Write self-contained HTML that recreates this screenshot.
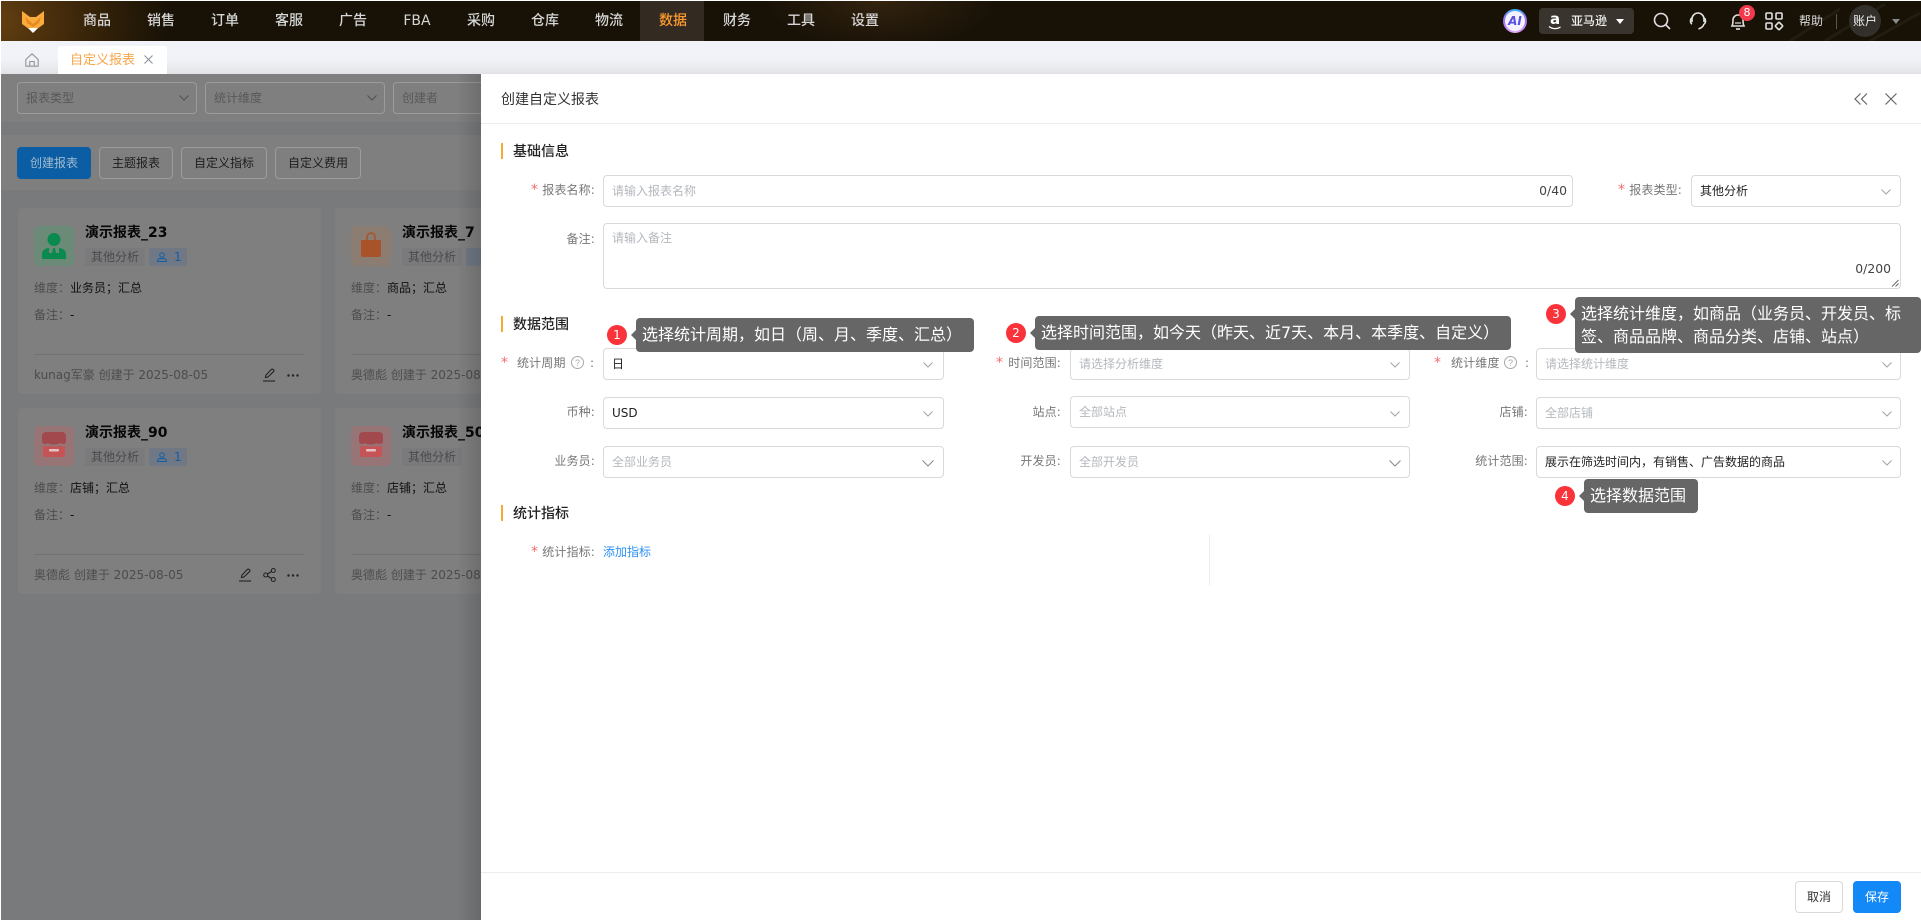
<!DOCTYPE html>
<html lang="zh"><head><meta charset="utf-8"><title>创建自定义报表</title>
<style>
*{box-sizing:border-box}
html,body{margin:0;padding:0;width:1921px;height:920px;overflow:hidden;background:#fff;font-family:"DejaVu Sans","Noto Sans CJK SC",sans-serif;font-size:12px;color:#333}
.a{position:absolute;white-space:nowrap}
svg{position:absolute;overflow:visible}
#nav{left:1px;top:1px;width:1920px;height:40px;background:radial-gradient(120px 50px at 880px 0,#33230f,transparent),radial-gradient(190px 120px at -20px 20px,#6b4413 0,#3a2509 55%,transparent 100%),#171106}
.n{position:absolute;top:1px;width:64px;height:40px;line-height:40px;text-align:center;font-size:14px;font-weight:500;color:#d6d6d6}
.f{position:absolute;top:82px;height:32px;background:#7f7f7f;border:1px solid #9b9b9b;border-radius:4px;line-height:30px;padding-left:8px;font-size:12px;color:#585858}
.b{position:absolute;top:147px;height:32px;line-height:30px;text-align:center;border:1px solid #9c9c9c;border-radius:4px;color:#1d1d1d;font-size:12px}
.card{position:absolute;width:303px;height:186px;background:#7f7f7f;border-radius:4px}
.tile{position:absolute;left:16px;top:18px;width:40px;height:40px;border-radius:5px}
.ttl{position:absolute;left:67px;top:15px;font-size:14px;font-weight:700;color:#060606;line-height:20px;white-space:nowrap}
.tag{position:absolute;left:67px;top:40px;width:60px;height:18px;background:#7a7a7c;border-radius:2px;text-align:center;line-height:18px;color:#4a4a4a}
.tagb{position:absolute;left:131px;top:40px;width:38px;height:18px;background:#6f7884;border-radius:2px;line-height:18px;color:#155fa5;padding-left:25px}
.d1{position:absolute;left:16px;top:71px;line-height:18px;color:#4d4d4d;white-space:nowrap}
.d1 b,.d2 b{font-weight:400;color:#111}
.d2{position:absolute;left:16px;top:98px;line-height:18px;color:#4d4d4d;white-space:nowrap}
.ln{position:absolute;left:16px;top:146px;width:271px;height:1px;background:#727272}
.ft{position:absolute;left:16px;top:158px;line-height:18px;color:#4c4c4c;white-space:nowrap}
#drawer{left:481px;top:74px;width:1440px;height:846px;background:#fff}
.hd{position:absolute;font-size:14px;font-weight:500;color:#222;line-height:20px;white-space:nowrap}
.bar{position:absolute;width:2px;height:16px;background:#f9a733}
.in{position:absolute;height:32px;border:1px solid #d9d9d9;border-radius:4px;background:#fff;line-height:30px;padding-left:8px;font-size:12px;color:#222;white-space:nowrap}
.ph{color:#b4b8bd}
.l{position:absolute;font-size:12px;line-height:18px;color:#777;white-space:nowrap;letter-spacing:.15px}
.r{color:#f56c6c;font-size:14px}
.tip{position:absolute;background:#666;color:#fff;border-radius:4px;font-size:16px;padding-left:6px;line-height:34px;white-space:nowrap}
.tip:before{content:"";position:absolute;left:-5px;top:12px;border-right:5px solid #666;border-top:5px solid transparent;border-bottom:5px solid transparent}
.num{position:absolute;width:20px;height:20px;border-radius:50%;background:#fa3239;color:#fff;text-align:center;font-size:12px;line-height:20px}
</style></head><body>

<!-- nav -->
<div class="a" id="nav"></div>
<svg style="left:1770px;top:1px;width:151px;height:40px" viewBox="0 0 151 40" fill="none"><path d="M20 40L70 8M55 40L115 3M100 40L150 12" stroke="#2b2418" stroke-width="3" opacity=".6"/></svg>
<div class="a" style="left:640px;top:1px;width:64px;height:40px;background:#332b22"></div>
<svg style="left:0;top:0;width:60px;height:42px" viewBox="0 0 60 42"><path d="M22 11L30 17H36L44 11V24L37 29H29L22 24Z" fill="#f9ab3d"/><path d="M25 17L33 24L41 17L39 23L33 27L27 23Z" fill="#e58b1e"/><path d="M28 28H38L33 33Z" fill="#fff"/></svg>
<div class="n" style="left:65px">商品</div><div class="n" style="left:129px">销售</div><div class="n" style="left:193px">订单</div><div class="n" style="left:257px">客服</div><div class="n" style="left:321px">广告</div><div class="n" style="left:385px">FBA</div><div class="n" style="left:449px">采购</div><div class="n" style="left:513px">仓库</div><div class="n" style="left:577px">物流</div><div class="n" style="left:641px;color:#ff9b2f">数据</div><div class="n" style="left:705px">财务</div><div class="n" style="left:769px">工具</div><div class="n" style="left:833px">设置</div>

<div class="a" style="left:1503px;top:9px;width:24px;height:24px;border-radius:50%;background:conic-gradient(#35b6f2,#a56bf5,#e7b0f7,#a56bf5,#35b6f2)"></div>
<div class="a" style="left:1505px;top:11px;width:20px;height:20px;border-radius:50%;background:#f4f2ff;text-align:center;line-height:20px;font-size:12px;font-weight:700;font-style:italic;color:#5b4fe0">AI</div>
<div class="a" style="left:1539px;top:8px;width:95px;height:26px;border-radius:4px;background:#39342d"></div>
<div class="a" style="left:1550px;top:9px;font-size:15px;font-weight:700;color:#fff;line-height:20px">a</div>
<svg style="left:1548px;top:26px;width:14px;height:4px" viewBox="0 0 14 4" fill="none"><path d="M1 .5C4 3 9 3.5 12.500 1" stroke="#fff" stroke-width="1.200"/></svg>
<div class="a" style="left:1571px;top:11px;line-height:20px;color:#f2f2f2;font-weight:500">亚马逊</div>
<svg style="left:1616px;top:19px;width:8px;height:5px" viewBox="0 0 8 5"><path d="M0 0H8L4 5Z" fill="#fff"/></svg>
<svg style="left:1652px;top:11px;width:20px;height:20px" viewBox="0 0 20 20" fill="none" stroke="#e0e0e0" stroke-width="1.600"><circle cx="9" cy="9" r="6.500"/><path d="M14 14L18 18"/></svg>
<svg style="left:1688px;top:11px;width:20px;height:20px" viewBox="0 0 20 20" fill="none" stroke="#e0e0e0" stroke-width="1.600"><path d="M4 11V8a6 6 0 0 1 12 0v3"/><path d="M4 7C2 8 2 12 4 13M16 7C18 8 18 12 16 13"/><path d="M16 13C15 16 13 17 10.500 18"/></svg>
<svg style="left:1728px;top:11px;width:20px;height:20px" viewBox="0 0 20 20" fill="none" stroke="#e0e0e0" stroke-width="1.600"><path d="M4 15C5 13 5 11 5 9a5 5 0 0 1 10 0c0 2 0 4 1 6Z"/><path d="M8 18H12"/><path d="M7 12H13" stroke-width="1.200"/></svg>
<div class="a" style="left:1739px;top:5px;width:16px;height:16px;border-radius:50%;background:#f5394c;color:#fff;text-align:center;line-height:16px;font-size:11px;font-weight:500">8</div>
<svg style="left:1765px;top:12px;width:18px;height:18px" viewBox="0 0 18 18" fill="none" stroke="#e0e0e0" stroke-width="1.600"><rect x="1" y="1" width="6" height="6" rx="1"/><rect x="11" y="1" width="6" height="6" rx="1"/><rect x="1" y="11" width="6" height="6" rx="1"/><rect x="11.200" y="11.200" width="5.600" height="5.600" rx="1" transform="rotate(45 14 14)"/></svg>
<div class="a" style="left:1799px;top:11px;line-height:20px;color:#dcdcdc">帮助</div>
<div class="a" style="left:1836px;top:14px;width:1px;height:15px;background:#555"></div>
<div class="a" style="left:1849px;top:5px;width:32px;height:32px;border-radius:50%;background:#33302b;text-align:center;line-height:33px;font-size:12px;color:#eee">账户</div>
<svg style="left:1892px;top:19px;width:8px;height:5px" viewBox="0 0 8 5"><path d="M0 0H8L4 5Z" fill="#8a8a8a"/></svg>

<!-- tabs -->
<div class="a" style="left:1px;top:41px;width:1920px;height:33px;background:linear-gradient(#f1f3f8 0,#f1f3f8 55%,#e2e3e6 100%)"></div>
<div class="a" style="left:58px;top:46px;width:109px;height:28px;background:#fff;border-radius:3px 3px 0 0"></div>
<svg style="left:25px;top:53px;width:14px;height:14px" viewBox="0 0 14 14" fill="none" stroke="#8f959e" stroke-width="1.100"><path d="M.8 6.500L7 .8L13.200 6.500V13.200H.8Z"/><path d="M4.800 13.200V8.500H9.200V13.200"/></svg>
<div class="a" style="left:70px;top:51px;font-size:13px;line-height:20px;color:#f9a548">自定义报表</div>
<svg style="left:144px;top:55px;width:9px;height:9px" viewBox="0 0 9 9" fill="none" stroke="#8a8f98" stroke-width="1"><path d="M.5.5L8.500 8.500M8.500.5L.5 8.500"/></svg>

<!-- dimmed page -->
<div class="a" style="left:1px;top:74px;width:480px;height:846px;background:#797a7c"></div>
<div class="a" style="left:1px;top:74px;width:480px;height:48px;background:#7f7f7f"></div>
<div class="a" style="left:1px;top:135px;width:480px;height:55px;background:#7f7f7f"></div>
<div class="f" style="left:17px;width:180px">报表类型<svg style="left:161px;top:12px;width:10px;height:6px" viewBox="0 0 10 6" fill="none" stroke="#4f4f4f"><path d="M.5.5L5 5L9.500.5"/></svg></div>
<div class="f" style="left:205px;width:180px">统计维度<svg style="left:161px;top:12px;width:10px;height:6px" viewBox="0 0 10 6" fill="none" stroke="#4f4f4f"><path d="M.5.5L5 5L9.500.5"/></svg></div>
<div class="f" style="left:393px;width:120px">创建者</div>
<div class="b" style="left:17px;width:74px;background:#0b5ea3;border-color:#0b5ea3;color:#a4bbcf">创建报表</div>
<div class="b" style="left:99px;width:74px">主题报表</div>
<div class="b" style="left:181px;width:86px">自定义指标</div>
<div class="b" style="left:275px;width:86px">自定义费用</div>

<div class="card" style="left:18px;top:208px">
 <div class="tile" style="background:#6b8a78"></div>
 <svg style="left:24px;top:24px;width:24px;height:28px" viewBox="0 0 24 28" fill="#0b8a50"><circle cx="12" cy="7.500" r="6.500"/><path d="M0 27V22C0 18 4 16 7 16V21H10L11 16H13L14 21H17V16C20 16 24 18 24 22V27Z"/></svg>
 <div class="ttl">演示报表_23</div><div class="tag">其他分析</div>
 <div class="tagb">1<svg style="left:8px;top:4px;width:10px;height:10px" viewBox="0 0 10 10" fill="none" stroke="#155fa5"><circle cx="5" cy="3" r="2.300"/><path d="M.5 9.500C.5 7 2 6.500 5 6.500S9.500 7 9.500 9.500Z"/></svg></div>
 <div class="d1">维度：<b>业务员；汇总</b></div><div class="d2">备注：<b>-</b></div><div class="ln"></div>
 <div class="ft">kunag军豪 创建于 2025-08-05</div>
 <svg style="left:244px;top:160px;width:14px;height:14px" viewBox="0 0 14 14" fill="none" stroke="#222" stroke-width="1.100"><path d="M3.500 9.500L4 7L9.500 1.300C10.500.5 12.500 2 11.800 3.300L6 9Z"/><path d="M1 13H13"/></svg>
 <svg style="left:269px;top:166px;width:12px;height:3px" viewBox="0 0 12 3" fill="#222"><circle cx="1.500" cy="1.500" r="1.200"/><circle cx="6" cy="1.500" r="1.200"/><circle cx="10.500" cy="1.500" r="1.200"/></svg>
</div>
<div class="card" style="left:335px;top:208px">
 <div class="tile" style="background:#8c7d73"></div>
 <svg style="left:25px;top:25px;width:22px;height:25px" viewBox="0 0 22 25"><path d="M7 8V4a4 4 0 0 1 8 0v4" fill="none" stroke="#a8532a" stroke-width="1.600"/><path d="M2 7H20Q21 7 21 8V22Q21 24 19 24H3Q1 24 1 22V8Q1 7 2 7Z" fill="#a8532a"/></svg>
 <div class="ttl">演示报表_7</div><div class="tag">其他分析</div><div class="tagb"></div>
 <div class="d1">维度：<b>商品；汇总</b></div><div class="d2">备注：<b>-</b></div><div class="ln" style="width:130px"></div>
 <div class="ft">奥德彪 创建于 2025-08-05</div>
</div>
<div class="card" style="left:18px;top:408px">
 <div class="tile" style="background:#977576"></div>
 <svg style="left:24px;top:24px;width:24px;height:25px" viewBox="0 0 24 25"><path d="M4 0H20Q24 0 24 5V9C24 12 21 13 18 11C16 13 8 13 6 11C3 13 0 12 0 9V5Q0 0 4 0Z" fill="#a2494e"/><path d="M1 14C3 14.500 5 14.500 6.500 13.500C9 15 15 15 17.500 13.500C19 14.500 21 14.500 23 14V22Q23 25 20 25H4Q1 25 1 22Z" fill="#c65356"/><rect x="7" y="17" width="10" height="2.500" rx="1" fill="#e3c3c3"/></svg>
 <div class="ttl">演示报表_90</div><div class="tag">其他分析</div>
 <div class="tagb">1<svg style="left:8px;top:4px;width:10px;height:10px" viewBox="0 0 10 10" fill="none" stroke="#155fa5"><circle cx="5" cy="3" r="2.300"/><path d="M.5 9.500C.5 7 2 6.500 5 6.500S9.500 7 9.500 9.500Z"/></svg></div>
 <div class="d1">维度：<b>店铺；汇总</b></div><div class="d2">备注：<b>-</b></div><div class="ln"></div>
 <div class="ft">奥德彪 创建于 2025-08-05</div>
 <svg style="left:220px;top:160px;width:14px;height:14px" viewBox="0 0 14 14" fill="none" stroke="#222" stroke-width="1.100"><path d="M3.500 9.500L4 7L9.500 1.300C10.500.5 12.500 2 11.800 3.300L6 9Z"/><path d="M1 13H13"/></svg>
 <svg style="left:245px;top:160px;width:13px;height:14px" viewBox="0 0 13 14" fill="none" stroke="#222" stroke-width="1.100"><circle cx="2.700" cy="7" r="2"/><circle cx="10.300" cy="2.500" r="2"/><circle cx="10.300" cy="11.500" r="2"/><path d="M4.500 6L8.500 3.500M4.500 8L8.500 10.500"/></svg>
 <svg style="left:269px;top:166px;width:12px;height:3px" viewBox="0 0 12 3" fill="#222"><circle cx="1.500" cy="1.500" r="1.200"/><circle cx="6" cy="1.500" r="1.200"/><circle cx="10.500" cy="1.500" r="1.200"/></svg>
</div>
<div class="card" style="left:335px;top:408px">
 <div class="tile" style="background:#977576"></div>
 <svg style="left:24px;top:24px;width:24px;height:25px" viewBox="0 0 24 25"><path d="M4 0H20Q24 0 24 5V9C24 12 21 13 18 11C16 13 8 13 6 11C3 13 0 12 0 9V5Q0 0 4 0Z" fill="#a2494e"/><path d="M1 14C3 14.500 5 14.500 6.500 13.500C9 15 15 15 17.500 13.500C19 14.500 21 14.500 23 14V22Q23 25 20 25H4Q1 25 1 22Z" fill="#c65356"/><rect x="7" y="17" width="10" height="2.500" rx="1" fill="#e3c3c3"/></svg>
 <div class="ttl">演示报表_50</div><div class="tag">其他分析</div>
 <div class="d1">维度：<b>店铺；汇总</b></div><div class="d2">备注：<b>-</b></div><div class="ln" style="width:130px"></div>
 <div class="ft">奥德彪 创建于 2025-08-05</div>
</div>
<div class="a" style="left:457px;top:74px;width:24px;height:846px;background:linear-gradient(90deg,rgba(0,0,0,0),rgba(0,0,0,.14))"></div>

<!-- drawer -->
<div class="a" id="drawer"></div>
<div class="a" style="left:501px;top:90px;font-size:14px;line-height:20px;color:#333">创建自定义报表</div>
<div class="a" style="left:481px;top:123px;width:1440px;height:1px;background:#ececec"></div>
<svg style="left:1854px;top:93px;width:14px;height:12px" viewBox="0 0 14 12" fill="none" stroke="#666" stroke-width="1.200"><path d="M6.500.5L1 6L6.500 11.500M13 .5L7.500 6L13 11.500"/></svg>
<svg style="left:1885px;top:93px;width:12px;height:12px" viewBox="0 0 12 12" fill="none" stroke="#666" stroke-width="1.200"><path d="M.5.5L11.500 11.500M11.500.5L.5 11.500"/></svg>

<div class="bar" style="left:501px;top:143px"></div><div class="hd" style="left:513px;top:142px">基础信息</div>
<div class="l" style="left:531px;top:181px"><span class="r">*</span></div><div class="l" style="right:1326px;top:181px">报表名称:</div>
<div class="in ph" style="left:603px;top:175px;width:970px">请输入报表名称<span style="position:absolute;right:5px;top:0;color:#444;font-size:12.400px">0/40</span></div>
<div class="l" style="left:1618px;top:181px"><span class="r">*</span></div><div class="l" style="right:239px;top:181px">报表类型:</div>
<div class="in" style="left:1691px;top:175px;width:210px">其他分析<svg style="left:189px;top:13px;width:10px;height:6px" viewBox="0 0 10 6" fill="none" stroke="#a3a3a3"><path d="M.5.5L5 5L9.500.5"/></svg></div>
<div class="l" style="right:1326px;top:230px">备注:</div>
<div class="in ph" style="left:603px;top:223px;width:1298px;height:66px;line-height:18px;padding-top:5px">请输入备注<span style="position:absolute;right:9px;bottom:10px;color:#444;font-size:12.400px">0/200</span><svg style="right:1px;bottom:1px;width:8px;height:8px" viewBox="0 0 8 8" fill="none" stroke="#666" stroke-width=".9"><path d="M1 7.500L7.500 1M4.500 7.500L7.500 4.500"/></svg></div>

<div class="bar" style="left:501px;top:316px"></div><div class="hd" style="left:513px;top:315px">数据范围</div>

<div class="l" style="left:501px;top:354px"><span class="r">*</span></div><div class="l" style="left:517px;top:354px">统计周期</div>
<svg style="left:571px;top:356px;width:13px;height:13px" viewBox="0 0 13 13" fill="none" stroke="#a8a8a8"><circle cx="6.500" cy="6.500" r="6"/><text x="6.500" y="10" font-size="9" text-anchor="middle" fill="#a8a8a8" stroke="none" font-family="Liberation Sans">?</text></svg>
<div class="l" style="left:590px;top:354px">:</div>
<div class="in" style="left:603px;top:348px;width:341px">日<svg style="left:319px;top:13px;width:10px;height:6px" viewBox="0 0 10 6" fill="none" stroke="#a3a3a3"><path d="M.5.5L5 5L9.500.5"/></svg></div>
<div class="l" style="right:1326px;top:403px">币种:</div>
<div class="in" style="left:603px;top:397px;width:341px">USD<svg style="left:319px;top:13px;width:10px;height:6px" viewBox="0 0 10 6" fill="none" stroke="#a3a3a3"><path d="M.5.5L5 5L9.500.5"/></svg></div>
<div class="l" style="right:1326px;top:452px">业务员:</div>
<div class="in ph" style="left:603px;top:446px;width:341px">全部业务员<svg style="left:318px;top:13px;width:12px;height:7px" viewBox="0 0 12 7" fill="none" stroke="#888"><path d="M.5.5L6 6L11.500.5"/></svg></div>

<div class="l" style="left:996px;top:354px"><span class="r">*</span></div><div class="l" style="right:860px;top:354px">时间范围:</div>
<div class="in ph" style="left:1070px;top:348px;width:340px">请选择分析维度<svg style="left:319px;top:13px;width:10px;height:6px" viewBox="0 0 10 6" fill="none" stroke="#a3a3a3"><path d="M.5.5L5 5L9.500.5"/></svg></div>
<div class="l" style="right:860px;top:403px">站点:</div>
<div class="in ph" style="left:1070px;top:396px;width:340px">全部站点<svg style="left:319px;top:14px;width:10px;height:6px" viewBox="0 0 10 6" fill="none" stroke="#a3a3a3"><path d="M.5.5L5 5L9.500.5"/></svg></div>
<div class="l" style="right:860px;top:452px">开发员:</div>
<div class="in ph" style="left:1070px;top:446px;width:340px">全部开发员<svg style="left:318px;top:13px;width:12px;height:7px" viewBox="0 0 12 7" fill="none" stroke="#888"><path d="M.5.5L6 6L11.500.5"/></svg></div>

<div class="l" style="left:1434px;top:354px"><span class="r">*</span></div><div class="l" style="left:1451px;top:354px">统计维度</div>
<svg style="left:1504px;top:356px;width:13px;height:13px" viewBox="0 0 13 13" fill="none" stroke="#a8a8a8"><circle cx="6.500" cy="6.500" r="6"/><text x="6.500" y="10" font-size="9" text-anchor="middle" fill="#a8a8a8" stroke="none" font-family="Liberation Sans">?</text></svg>
<div class="l" style="left:1525px;top:354px">:</div>
<div class="in ph" style="left:1536px;top:348px;width:365px">请选择统计维度<svg style="left:345px;top:13px;width:10px;height:6px" viewBox="0 0 10 6" fill="none" stroke="#a3a3a3"><path d="M.5.5L5 5L9.500.5"/></svg></div>
<div class="l" style="right:393px;top:403px">店铺:</div>
<div class="in ph" style="left:1536px;top:397px;width:365px">全部店铺<svg style="left:345px;top:13px;width:10px;height:6px" viewBox="0 0 10 6" fill="none" stroke="#a3a3a3"><path d="M.5.5L5 5L9.500.5"/></svg></div>
<div class="l" style="right:393px;top:452px">统计范围:</div>
<div class="in" style="left:1536px;top:446px;width:365px">展示在筛选时间内，有销售、广告数据的商品<svg style="left:345px;top:13px;width:10px;height:6px" viewBox="0 0 10 6" fill="none" stroke="#a3a3a3"><path d="M.5.5L5 5L9.500.5"/></svg></div>

<div class="bar" style="left:501px;top:505px"></div><div class="hd" style="left:513px;top:504px">统计指标</div>
<div class="l" style="left:531px;top:543px"><span class="r">*</span></div><div class="l" style="right:1326px;top:543px">统计指标:</div>
<div class="l" style="left:603px;top:543px;color:#2d92f5;letter-spacing:0">添加指标</div>
<div class="a" style="left:1209px;top:535px;width:1px;height:50px;background:#ececec"></div>

<!-- guides -->
<div class="num" style="left:607px;top:325px">1</div>
<div class="tip" style="left:636px;top:318px;width:338px;height:34px">选择统计周期，如日（周、月、季度、汇总）</div>
<div class="num" style="left:1006px;top:323px">2</div>
<div class="tip" style="left:1035px;top:316px;width:476px;height:34px">选择时间范围，如今天（昨天、近7天、本月、本季度、自定义）</div>
<div class="num" style="left:1546px;top:304px">3</div>
<div class="tip" style="left:1575px;top:297px;width:346px;height:56px;line-height:23px;padding-top:5px">选择统计维度，如商品（业务员、开发员、标<br>签、商品品牌、商品分类、店铺、站点）</div>
<div class="num" style="left:1555px;top:486px">4</div>
<div class="tip" style="left:1584px;top:479px;width:114px;height:34px">选择数据范围</div>

<!-- footer -->
<div class="a" style="left:481px;top:872px;width:1440px;height:1px;background:#ececec"></div>
<div class="a" style="left:1795px;top:881px;width:48px;height:32px;border:1px solid #d9d9d9;border-radius:4px;text-align:center;line-height:30px;color:#333">取消</div>
<div class="a" style="left:1853px;top:881px;width:48px;height:32px;background:#1388f7;border-radius:4px;text-align:center;line-height:32px;color:#fff">保存</div>
</body></html>
